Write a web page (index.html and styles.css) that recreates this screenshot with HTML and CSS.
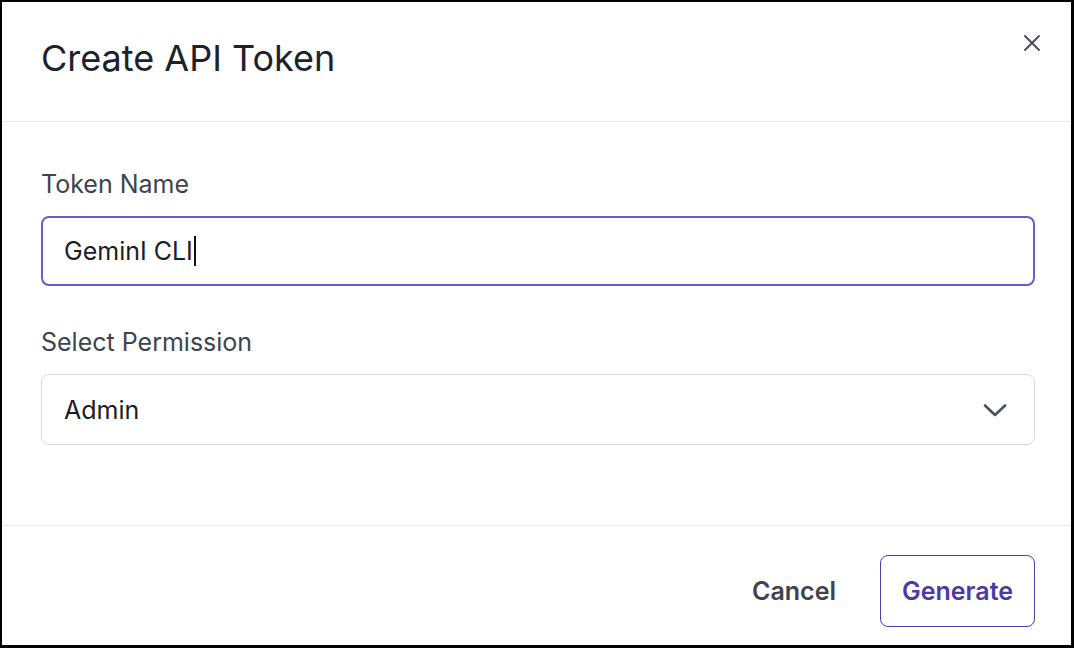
FILE: index.html
```html
<!DOCTYPE html>
<html>
<head>
<meta charset="utf-8">
<link rel="stylesheet" href="styles.css">
</head>
<body>
<div class="modal">
  <header class="modal-header">
    <h1 class="title">Create API Token</h1>
    <button class="close" aria-label="Close">
      <svg width="20" height="20" viewBox="0 0 20 20"><path d="M3 3 L17 17 M17 3 L3 17" stroke="#4b505c" stroke-width="2" stroke-linecap="round" fill="none"/></svg>
    </button>
  </header>
  <section class="modal-body">
    <label class="label">Token Name</label>
    <div class="input focused"><span>GeminI CLI</span><span class="caret"></span></div>
    <label class="label">Select Permission</label>
    <div class="input select">
      <span>Admin</span>
      <svg width="26" height="26" viewBox="0 0 26 26"><path d="M3 8.5 L13 18 L23 8.5" stroke="#4b505c" stroke-width="2.6" stroke-linecap="round" stroke-linejoin="round" fill="none"/></svg>
    </div>
  </section>
  <footer class="modal-footer">
    <button class="btn cancel">Cancel</button>
    <button class="btn generate">Generate</button>
  </footer>
</div>
</body>
</html>
```
FILE: styles.css
```css
* { box-sizing: border-box; }
html, body { margin: 0; padding: 0; background: #fff; }
body { font-family: Inter, "Noto Sans", sans-serif; }
.modal {
  width: 1074px;
  height: 648px;
  border-style: solid;
  border-color: #000;
  border-width: 2px 3px 3px 2px;
  display: flex;
  flex-direction: column;
  background: #fff;
}
.modal-header {
  height: 120px;
  flex: none;
  border-bottom: 1px solid #e6e7ea;
  display: flex;
  align-items: flex-start;
  justify-content: space-between;
  padding: 0 27px 0 39px;
}
.title {
  margin: 34px 0 0;
  font-size: 36px;
  font-weight: 400;
  color: #1d212b;
}
.close {
  margin-top: 29px;
  border: none;
  background: none;
  padding: 0;
  width: 24px;
  height: 24px;
  display: flex;
  align-items: center;
  justify-content: center;
}
.modal-body {
  flex: 1;
  padding: 47px 36px 0 39px;
  display: flex;
  flex-direction: column;
  border-bottom: 1px solid #e6e7ea;
}
.label {
  font-size: 25px;
  color: #3e4350;
  line-height: 30px;
  margin-bottom: 17px;
}
.input {
  height: 70px;
  flex: none;
  border: 1px solid #d9dadd;
  border-radius: 8px;
  padding: 0 22px;
  display: flex;
  align-items: center;
  font-size: 25px;
  color: #1a1d24;
  margin-bottom: 41px;
}
.input.focused {
  border: 2px solid #6c5cc6;
  padding: 0 21px;
}
.caret {
  display: inline-block;
  width: 2px;
  height: 30px;
  background: #111;
  margin-left: 1px;
}
.select {
  height: 71px;
  justify-content: space-between;
  padding-right: 26px;
}
.modal-footer {
  height: 119px;
  flex: none;
  display: flex;
  align-items: flex-start;
  justify-content: flex-end;
  gap: 24px;
  padding: 29px 36px 0 0;
}
.btn {
  font-family: Inter, "Noto Sans", sans-serif;
  font-size: 25px;
  font-weight: 600;
  background: none;
  border: none;
  cursor: pointer;
}
.cancel {
  color: #3e434f;
  padding: 0 20px;
  height: 72px;
}
.generate {
  width: 155px;
  height: 72px;
  border: 1px solid #4d3fb0;
  border-radius: 8px;
  color: #4a3aa6;
}
```
